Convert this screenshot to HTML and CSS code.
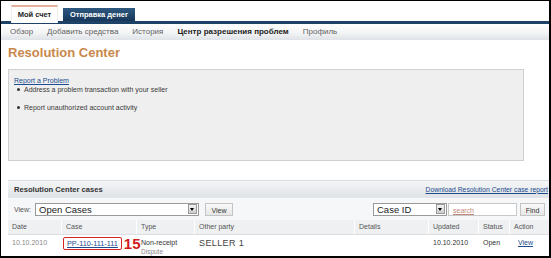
FILE: index.html
```html
<!DOCTYPE html>
<html>
<head>
<meta charset="utf-8">
<link rel="stylesheet" href="styles.css">
</head>
<body>
<div class="frame">
  <div class="tabs">
    <div class="tab active">Мой счет</div>
    <div class="tab dark">Отправка денег</div>
  </div>
  <div class="subnav">
    <span>Обзор</span>
    <span>Добавить средства</span>
    <span>История</span>
    <span class="cur">Центр разрешения проблем</span>
    <span>Профиль</span>
  </div>
  <h1 class="title">Resolution Center</h1>
  <div class="box">
    <a class="link" href="#">Report a Problem</a>
    <ul class="list">
      <li>Address a problem transaction with your seller</li>
      <li>Report unauthorized account activity</li>
    </ul>
  </div>
  <div class="cases">
    <div class="cases-head">
      <span class="cases-title">Resolution Center cases</span>
      <a class="link small" href="#">Download Resolution Center case report</a>
    </div>
    <div class="filters">
      <div class="fl">
        <span class="lbl">View:</span>
        <div class="sel wide"><span>Open Cases</span><i class="arrow"></i></div>
        <div class="btn">View</div>
      </div>
      <div class="fr">
        <div class="sel mid"><span>Case ID</span><i class="arrow"></i></div>
        <div class="inp">search</div>
        <div class="btn">Find</div>
      </div>
    </div>
    <div class="grid head">
      <div>Date</div><div>Case</div><div>Type</div><div>Other party</div><div>Details</div><div>Updated</div><div>Status</div><div>Action</div>
    </div>
    <div class="grid row">
      <div class="muted">10.10.2010</div>
      <div class="casecell"><span class="casebox"><a class="case" href="#">PP-110-111-111</a></span><b class="num">15</b></div>
      <div class="type">Non-receipt<small>Dispute</small></div>
      <div class="seller">SELLER 1</div>
      <div></div>
      <div>10.10.2010</div>
      <div>Open</div>
      <div class="act"><a class="link" href="#">View</a></div>
    </div>
  </div>
</div>
</body>
</html>
```
FILE: styles.css
```css
html, body { margin: 0; padding: 0; }
body { width: 551px; height: 258px; overflow: hidden; background: #000; font-family: "Liberation Sans", Arial, sans-serif; }
.frame { margin: 1px 2px 2px 1px; height: 255px; background: #fff; overflow: hidden; box-sizing: border-box; }
.tabs { display: flex; align-items: flex-end; gap: 5px; padding-left: 10px; height: 20px; }
.tab { font-size: 7.5px; font-weight: bold; white-space: nowrap; text-align: center; box-sizing: border-box; }
.tab.active { width: 47px; background: #fff; color: #222; border-top: 2px solid #e2b19c; border-left: 1px solid #eee; border-right: 1px solid #eee; height: 18px; line-height: 16px; position: relative; top: 2px; }
.tab.dark { width: 72px; background: linear-gradient(#2f5980, #17375a); color: #fff; height: 13px; line-height: 13px; }
.subnav { border-top: 3px solid #1d4268; height: 16px; background: linear-gradient(#ffffff, #f3f4f5 55%, #dfe3e7); display: flex; padding-left: 9px; font-size: 8px; color: #5f5f5f; line-height: 15px; }
.subnav span { margin-right: 14px; }
.subnav .cur { font-weight: bold; color: #222; }
.title { margin: 6px 0 0 7px; font-size: 13px; font-weight: bold; color: #c9884a; line-height: 14px; }
.box { margin: 9px 0 0 7px; width: 516px; height: 92px; box-sizing: border-box; border: 1px solid #cfcfcf; background: #efefef; padding: 7px 5px 5px; font-size: 7px; color: #3a3a3a; }
.link { color: #1d4d8f; text-decoration: underline; font-size: 7px; }
.link.small { font-size: 6.8px; }
.list { margin: 1px 0 0; padding-left: 10px; list-style: none; }
.list li { position: relative; line-height: 9px; margin-bottom: 9px; }
.list li::before { content: ""; position: absolute; left: -7px; top: 3px; width: 3px; height: 3px; border-radius: 50%; background: #333; }
.cases { margin: 19px 0 0 7px; }
.cases-head { display: flex; justify-content: space-between; align-items: center; height: 16px; background: linear-gradient(#f5f6f7, #dfe3e7); border-top: 1px solid #d8dce0; padding: 0 1px 0 6px; }
.cases-title { font-size: 7.6px; font-weight: bold; color: #333; }
.filters { display: flex; justify-content: space-between; align-items: center; height: 22px; background: #f6f7f8; border-top: 1px solid #e2e5e8; padding: 0 4px 0 6px; }
.fl, .fr { display: flex; align-items: center; }
.lbl { font-size: 7px; color: #555; margin-right: 4px; }
.sel { height: 13px; border: 1px solid #9a9a9a; background: #fff; display: flex; justify-content: space-between; align-items: center; padding-left: 3px; font-size: 9.5px; color: #222; box-sizing: border-box; }
.sel.wide { width: 164px; margin-right: 6px; }
.sel.mid { width: 74px; margin-right: 1px; }
.arrow { width: 9px; height: 10px; margin-right: 1px; background: linear-gradient(#f3f3f3, #cfcfcf); border: 1px solid #999; box-sizing: border-box; position: relative; }
.arrow::after { content: ""; position: absolute; left: 1px; top: 3px; border: 2.5px solid transparent; border-top: 3px solid #000; border-bottom: 0; }
.btn { height: 13px; line-height: 13px; padding: 0 5px; font-size: 7px; color: #333; border: 1px solid #c4c4c4; background: linear-gradient(#fafafa, #e6e6e6); text-align: center; }
.fl .btn { width: 28px; box-sizing: border-box; }
.fr .btn { width: 25px; box-sizing: border-box; padding: 0; }
.inp { width: 69px; height: 13px; line-height: 13px; border: 1px solid #c8c8c8; background: #fff; font-size: 7px; color: #c0887a; text-decoration: underline; padding-left: 4px; box-sizing: border-box; margin-right: 3px; }
.grid { display: grid; grid-template-columns: 54px 75px 58px 160px 74px 50px 31px 41px; }
.grid > div { padding-left: 4px; box-sizing: border-box; }
.head { height: 15px; line-height: 14px; background: #eef0f2; font-size: 7px; color: #555; border-bottom: 1px solid #dcdfe2; box-sizing: border-box; }
.head > div { border-right: 1px solid #fff; }
.row { height: 22px; font-size: 7px; color: #333; align-items: start; padding-top: 4px; }
.muted { color: #888; }
.casecell { display: flex; align-items: center; padding-left: 1px !important; margin-top: -3px; white-space: nowrap; }
.casebox { display: inline-block; border: 1px solid #d42424; border-radius: 2px; padding: 1px 3px; line-height: 9px; }
.case { color: #1d4d8f; text-decoration: underline; font-size: 7.3px; }
.num { color: #d01c1c; font-size: 15px; margin-left: 2px; line-height: 15px; }
.type { line-height: 8px; white-space: nowrap; }
.type small { display: block; color: #888; font-size: 6.5px; line-height: 9px; }
.seller { font-size: 9px; letter-spacing: 0.4px; color: #444; margin-top: -1px; }
.act { padding-left: 8px !important; }
```
